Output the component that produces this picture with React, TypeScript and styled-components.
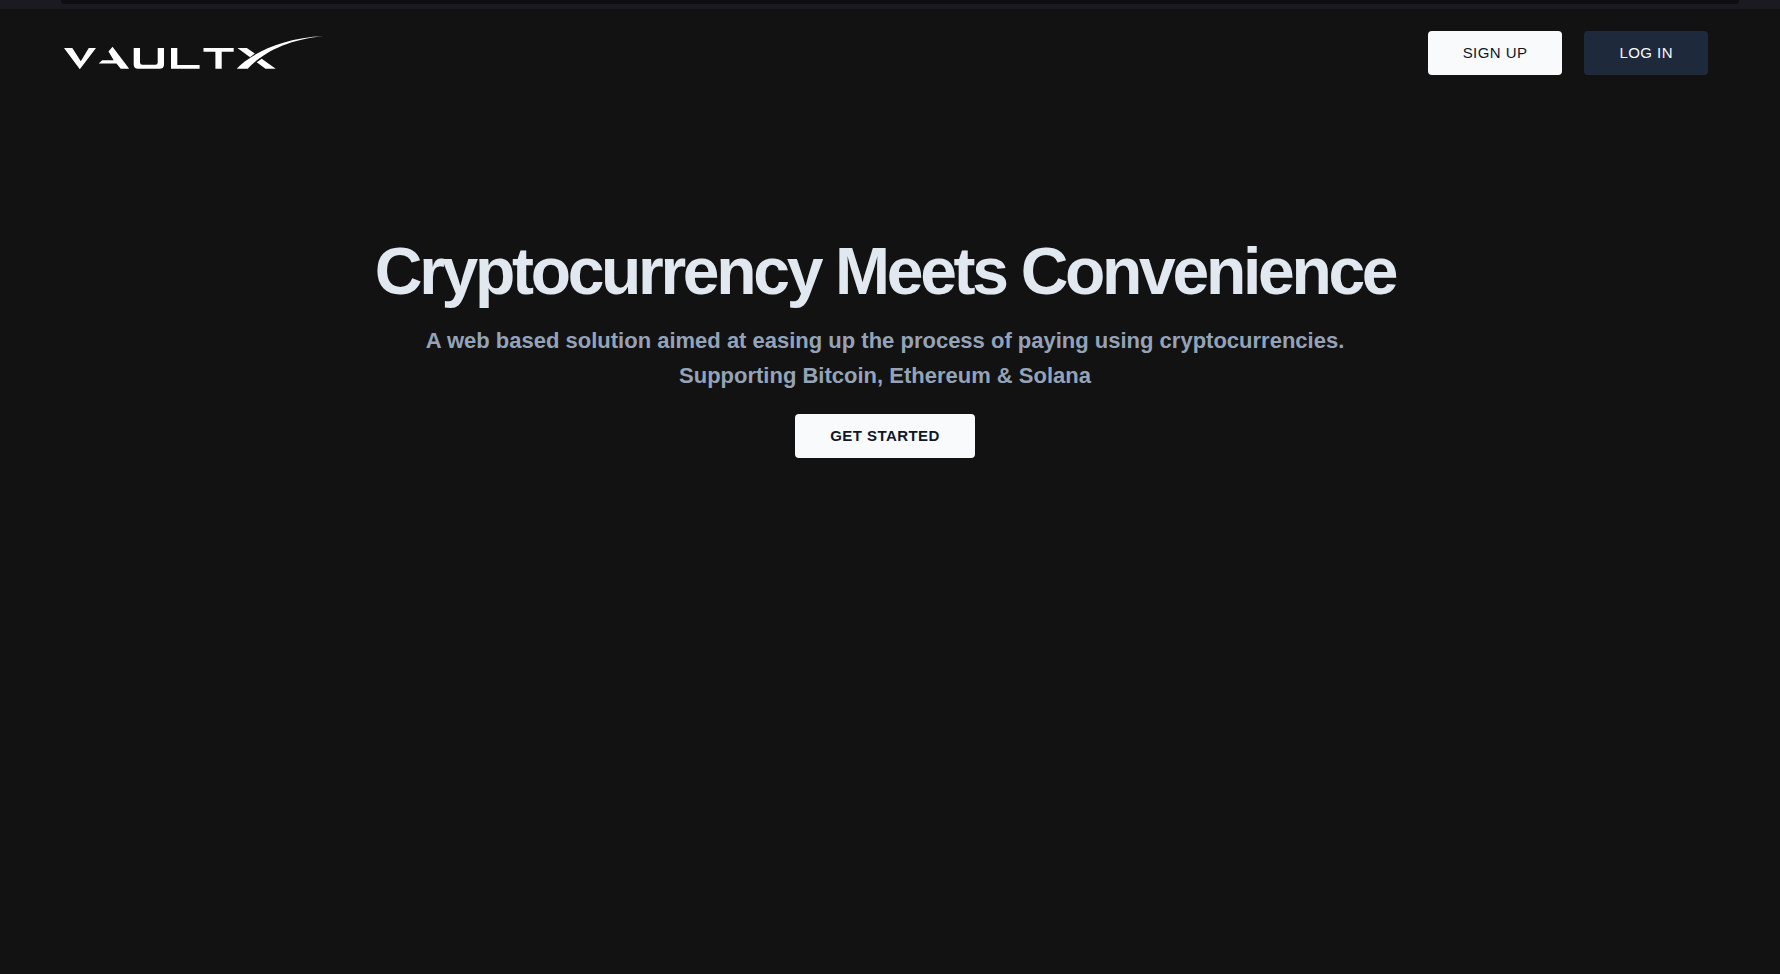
import React from "react";
import styled, { createGlobalStyle } from "styled-components";

const GlobalStyle = createGlobalStyle`
  *, *::before, *::after { box-sizing: border-box; }
  body {
    margin: 0;
    background: #121212;
    font-family: "Liberation Sans", Arial, sans-serif;
  }
`;

const Page = styled.div`
  display: flex;
  flex-direction: column;
  min-height: 100vh;
`;

const TopStrip = styled.div`
  height: 9px;
  padding: 0 41px 0 61px;
  background: #1b1a20;
`;

const StripPanel = styled.div`
  height: 4px;
  border-radius: 0 0 4px 4px;
  background: #0d0d12;
`;

const Content = styled.div`
  display: flex;
  flex-direction: column;
  padding-right: 10px;
`;

const Header = styled.header`
  display: flex;
  align-items: center;
  justify-content: space-between;
  padding: 22px 62px 0 60px;
`;

const LogoLink = styled.a`
  display: block;
  line-height: 0;
`;

const Nav = styled.nav`
  display: flex;
  gap: 22px;
`;

const Button = styled.button<{ $dark?: boolean; $bold?: boolean }>`
  height: 44px;
  padding: 0 35px;
  border: 0;
  border-radius: 4px;
  background: ${(p) => (p.$dark ? "#1e293b" : "#f8fafc")};
  color: ${(p) => (p.$dark ? "#f8fafc" : "#0f172a")};
  font-family: inherit;
  font-size: 15px;
  font-weight: ${(p) => (p.$bold ? 700 : 400)};
  line-height: 24px;
  letter-spacing: 0.03em;
  text-transform: uppercase;
  cursor: pointer;
`;

const Hero = styled.main`
  display: flex;
  flex-direction: column;
  align-items: center;
  padding: 160px 24px 0;
  text-align: center;
`;

const Title = styled.h1`
  margin: 0;
  color: #e2e8f0;
  font-size: 66px;
  font-weight: 700;
  line-height: 72px;
  letter-spacing: -0.05em;
`;

const Lead = styled.p`
  margin: 16px 0 21px;
  color: #94a3b8;
  font-size: 22px;
  font-weight: 700;
  line-height: 35px;
`;

function Logo() {
  return (
    <svg width="270" height="44" viewBox="60 31 270 44" fill="#fff" role="img" aria-label="VaultX">
      <path d="M64 48h8.300l8.500 13.200L88.800 48H96L79.800 69.300z" />
      <path d="M112.500 46.800l16.700 21.900h-8.500l-4.200-5.200H98.700l3.500-3.200h11.500l-5.200-8.700z" />
      <path d="M133.700 48h6.300v14.500q0 2.200 2.400 2.200h13q2.300 0 2.300-2.200V48h6.300v16.500q0 4.200-4.600 4.200h-21.200q-4.500 0-4.500-4.200z" />
      <path d="M171 48h6.300v17h22.300v3.700H171z" />
      <path d="M203.500 48h30.200v3.700h-12v17h-6.300v-17h-11.900z" />
      <path d="M237.500 48h9.300l8 5.500-4.800 3.700z" />
      <path d="M256.700 62.200l5-3.500 14 10h-10.200z" />
      <path d="M236.700 68.700C249 55.500 281 37.200 324 36.300C287 39.200 262.500 53.300 247.700 68.700z" />
    </svg>
  );
}

export default function App() {
  return (
    <>
      <GlobalStyle />
      <Page>
        <TopStrip>
          <StripPanel />
        </TopStrip>
        <Content>
          <Header>
            <LogoLink href="#">
              <Logo />
            </LogoLink>
            <Nav>
              <Button>Sign up</Button>
              <Button $dark>Log in</Button>
            </Nav>
          </Header>
          <Hero>
            <Title>Cryptocurrency Meets Convenience</Title>
            <Lead>
              A web based solution aimed at easing up the process of paying using cryptocurrencies.
              <br />
              Supporting Bitcoin, Ethereum &amp; Solana
            </Lead>
            <Button $bold>Get started</Button>
          </Hero>
        </Content>
      </Page>
    </>
  );
}
